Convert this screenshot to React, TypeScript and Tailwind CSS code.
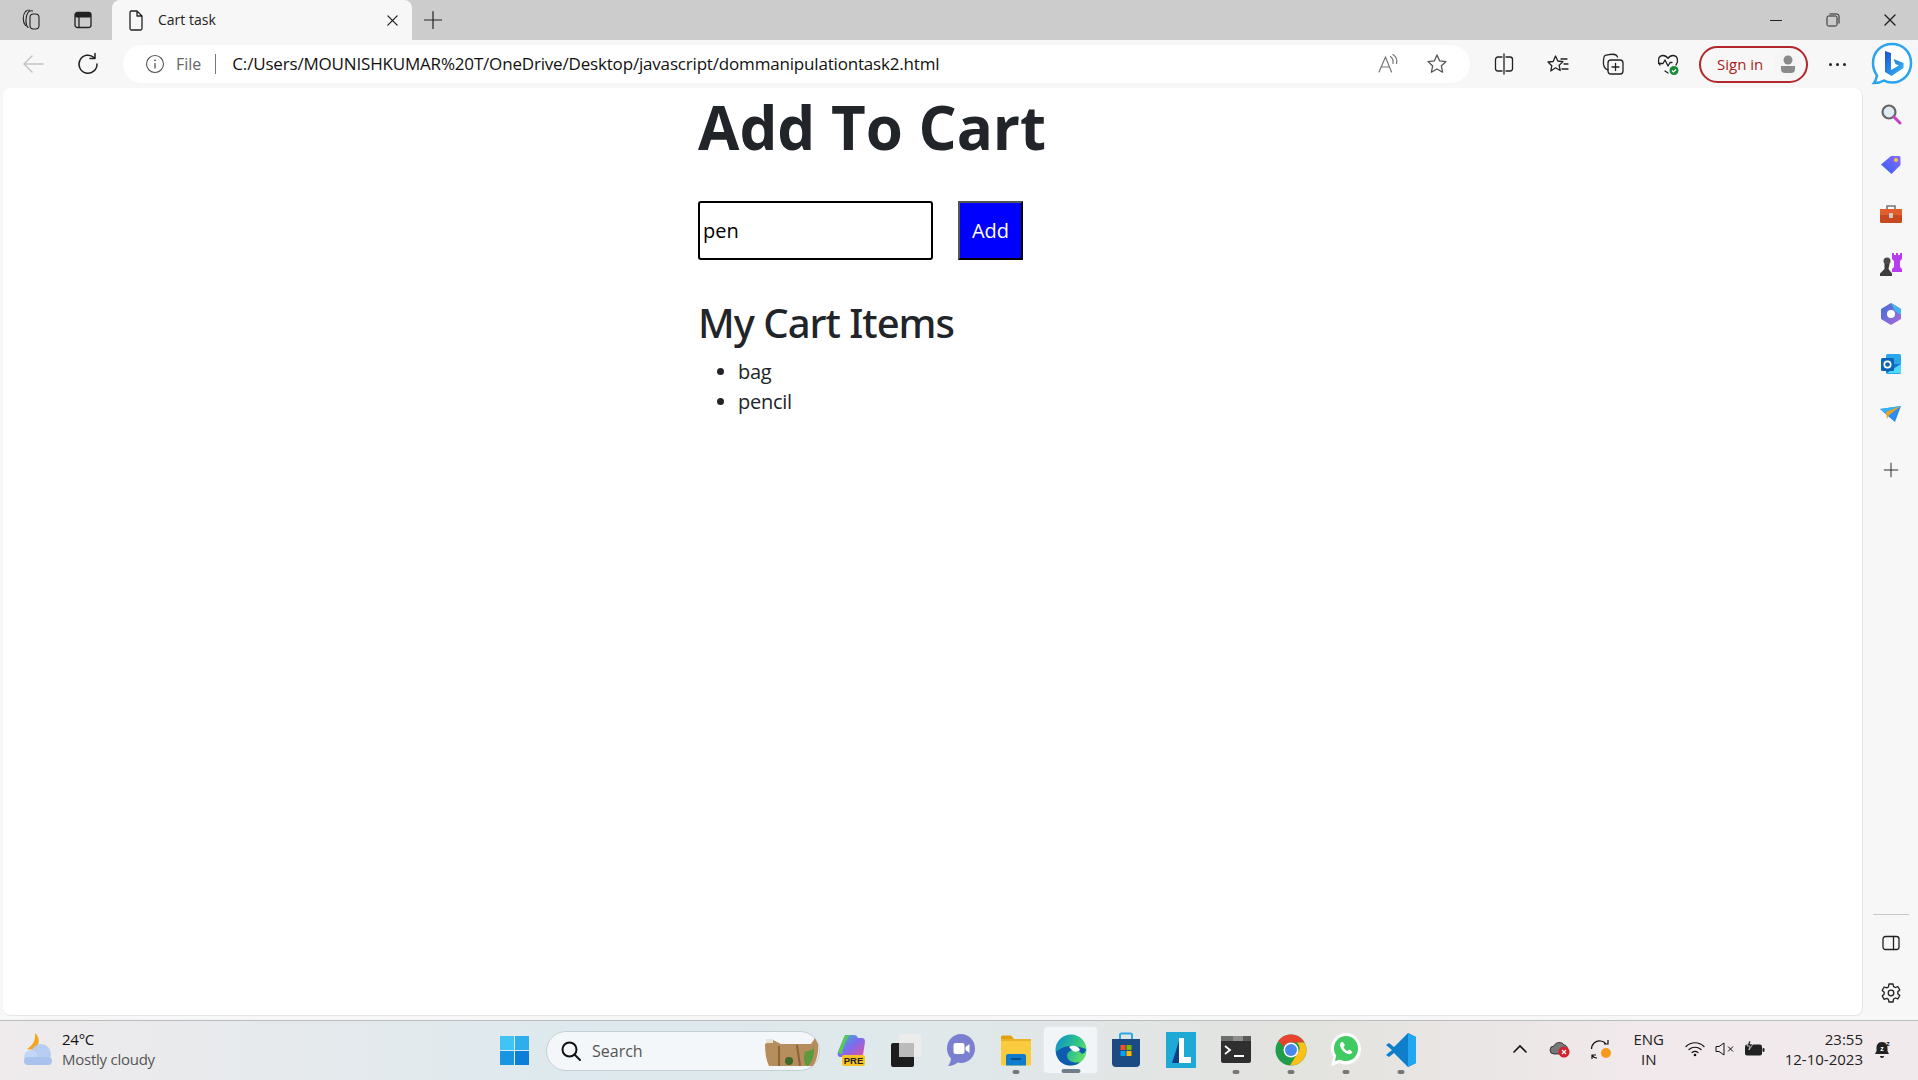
const S = ({ w = 20, h = 20, vb = "0 0 20 20", children, c = "" }: { w?: number; h?: number; vb?: string; children: React.ReactNode; c?: string }) => (
  <svg width={w} height={h} viewBox={vb} fill="none" className={`block shrink-0 ${c}`}>{children}</svg>
);
const st = { stroke: "#222", strokeWidth: 1.3, strokeLinecap: "round" as const, strokeLinejoin: "round" as const };

const Collections = () => <S w={22} h={24} vb="0 0 22 24"><rect x="10" y="6" width="9" height="15" rx="3.500" {...st} strokeWidth={1.1} /><path d="M8 19.500C5.500 17 5 9 8 4.500c1-1.500 3-2 4.500-1.500" {...st} strokeWidth={1.1} /><path d="M5.500 17.500C2.500 14 2.500 7 5.500 3.500c1-1 2.500-1.500 4-1.500" {...st} strokeWidth={1.1} /></S>;
const TabActions = () => <S w={20} h={20}><rect x="2" y="2.500" width="16" height="15" rx="2.500" {...st} /><rect x="2" y="2.500" width="16" height="5" rx="1.500" fill="#222" /><path d="M6 7v10" {...st} /></S>;
const FileIcon = () => <S w={18} h={22} vb="0 0 18 22"><path d="M3 3.500A1.500 1.500 0 0 1 4.500 2H10l5 5v12.500a1.500 1.500 0 0 1-1.500 1.500h-9A1.500 1.500 0 0 1 3 19.500z M10 2v5h5" {...st} /></S>;
const X = ({ s = 14 }: { s?: number }) => <S w={s} h={s} vb="0 0 14 14"><path d="M2 2l10 10M12 2L2 12" {...st} strokeWidth={1.4} /></S>;
const Plus = ({ s = 20 }: { s?: number }) => <S w={s} h={s}><path d="M10 1.500v17M1.500 10h17" {...st} strokeWidth={1.2} /></S>;
const Back = () => <S w={24} h={24} vb="0 0 24 24"><path d="M22 12H3M11 4l-8 8 8 8" stroke="#c4c4c4" strokeWidth="1.500" strokeLinecap="round" strokeLinejoin="round" /></S>;
const Refresh = () => <S w={24} h={24} vb="0 0 24 24"><path d="M18 5.500A9 9 0 1 0 21 12M19 1.500V6.500h-5" {...st} strokeWidth={1.5} /></S>;
const Info = () => <S w={20} h={20}><circle cx="10" cy="10" r="8.500" stroke="#555" strokeWidth="1.100" /><path d="M10 9v5.500" stroke="#555" strokeWidth="1.300" /><circle cx="10" cy="6.300" r="0.900" fill="#555" /></S>;
const ReadAloud = () => <S w={22} h={22} vb="0 0 22 22"><path d="M2 19L8.500 4l6 15M4.500 14h8M13.500 3.500c2 1.500 3 4 2.500 7M16 1.500c3 2 4.300 5.500 3.500 9" stroke="#777" strokeWidth="1.200" strokeLinecap="round" /></S>;
const Star = () => <S w={24} h={24} vb="0 0 24 24"><path d="M12 3l2.700 5.900 6.300.7-4.700 4.300 1.300 6.300-5.600-3.200-5.600 3.200 1.300-6.300L3 9.600l6.300-.7z" stroke="#555" strokeWidth="1.300" strokeLinejoin="round" /></S>;
const Split = () => <S w={22} h={22} vb="0 0 22 22"><path d="M11 1v20M9 4H5a2.500 2.500 0 0 0-2.500 2.500v9A2.500 2.500 0 0 0 5 18h4M13 4h4a2.500 2.500 0 0 1 2.500 2.500v9A2.500 2.500 0 0 1 17 18h-4" {...st} /></S>;
const Favs = () => <S w={24} h={24} vb="0 0 24 24"><path d="M9.500 4l2.300 5 5.200.6-3.800 3.700 1 5.200-4.700-2.700L4.800 19l1-5.200L2 10l5.200-.5z" {...st} /><path d="M15 7h6M18 12h4M16 17h6" {...st} /></S>;
const CollAdd = () => <S w={24} h={24} vb="0 0 24 24"><path d="M7 18C3 17 2 13 2.500 8s1.500-5 6-5.500 7-.5 8 2.500" {...st} /><rect x="7" y="8" width="15" height="14" rx="3" {...st} /><path d="M14.500 11.500v7M11 15h7" {...st} /></S>;
const Heart = () => <S w={24} h={24} vb="0 0 24 24"><path d="M4 13C1 9 2.500 3.500 7 3.500c2.500 0 4 1.500 5 3 1-1.500 2.500-3 5-3 4.500 0 6 5.500 3 9.500M9 19l3 2" {...st} /><path d="M2.500 11.500h4.500l2-3.500 3 6 2-3.500h2" {...st} /><circle cx="18" cy="18.500" r="4.500" fill="#1c8a3a" /><path d="M16 18.500l1.500 1.500 2.500-2.500" stroke="#fff" strokeWidth="1.200" /></S>;
const Bing = () => (
  <S w={42} h={44} vb="0 0 42 44">
    <defs>
      <linearGradient id="bg" x1="0" y1="0" x2="1" y2="1"><stop offset="0" stopColor="#1b4fd6" /><stop offset="1" stopColor="#35c1f1" /></linearGradient>
    </defs>
    <path d="M21 2C10 2 2 10 2 21c0 5 1.500 9 4 12.500-.5 3-1.500 5.500-3 7.500 4 0 7.500-1 10-2.500C15.500 40 18 40.500 21 40.500c11 0 19-8.500 19-19.500S32 2 21 2z" fill="#fff" stroke="#2aa4ee" strokeWidth="2.500" />
    <path d="M14 9l6 2v17l8-4.500-3.500-1.500-2-5 10 4v5l-12 8-6.500-4z" fill="url(#bg)" />
  </S>
);
const Panel = () => <S w={18} h={16} vb="0 0 18 16"><rect x="1" y="1.500" width="16" height="13" rx="2.500" {...st} /><path d="M11.500 1.500v13" {...st} /></S>;
const Gear = () => <S w={22} h={22} vb="0 0 22 22"><path d="M9 2h4l.6 2.600 1.700.9 2.500-.9 2 3.400-2 1.800v1.900l2 1.800-2 3.400-2.500-.9-1.700 1L13 20H9l-.6-2.600-1.700-1-2.500.9-2-3.400 2-1.800v-1.900l-2-1.800 2-3.400 2.500.9 1.700-.9z" {...st} /><circle cx="11" cy="11" r="2.800" {...st} /></S>;

const SideSearch = () => <S w={22} h={22} vb="0 0 22 22"><circle cx="9" cy="9" r="6.500" fill="#dfeaf2" stroke="#666" strokeWidth="2.200" /><path d="M14 14l6 6" stroke="#c83fd0" strokeWidth="3" strokeLinecap="round" /></S>;
const SideTag = () => <S w={22} h={22} vb="0 0 22 22"><defs><linearGradient id="tg" x1="0" y1="1" x2="1" y2="0"><stop offset="0" stopColor="#2e5df5" /><stop offset="1" stopColor="#8a6cf8" /></linearGradient></defs><path d="M11 3h8a1.500 1.500 0 0 1 1.500 1.500V12l-9 9L1 11.500z" fill="url(#tg)" /><circle cx="16" cy="7" r="2" fill="#f6c93a" /></S>;
const SideBox = () => <S w={24} h={22} vb="0 0 24 22"><path d="M8 6V3h8v3" stroke="#777" strokeWidth="1.600" /><rect x="1" y="6" width="22" height="14" rx="1.500" fill="#c8491f" /><rect x="1" y="6" width="22" height="6" fill="#e25f2d" /><rect x="10" y="10" width="4" height="5" rx="1" fill="#ccc" /></S>;
const SideChess = () => <S w={24} h={26} vb="0 0 24 26"><path d="M13 2h2v2h2V2h2v2h2V2h2v6l-2 2v6l2 2v3H13v-3l2-2v-6l-2-2z" fill="#b83df0" /><circle cx="8" cy="10" r="3.500" fill="#4a4a4a" /><path d="M5.500 13h5l-1 5 3.500 4.500V25H1v-2.500L5.500 18z" fill="#3d3d3d" /></S>;
const SideM365 = () => <S w={22} h={24} vb="0 0 22 24"><defs><linearGradient id="m1" x1="0" y1="0" x2="1" y2="1"><stop offset="0" stopColor="#3a6fd8" /><stop offset="1" stopColor="#b06ad8" /></linearGradient></defs><path d="M11 1l10 6v10l-10 6L1 17V7z" fill="url(#m1)" /><path d="M11 1l10 6v6l-6-4z" fill="#42b6e8" /><circle cx="11" cy="12" r="4" fill="#fff" /></S>;
const SideOutlook = () => <S w={22} h={22} vb="0 0 22 22"><rect x="6" y="1" width="15" height="20" rx="1.500" fill="#28a8ea" /><path d="M6 11l15 0v9H6z" fill="#0f78d4" /><path d="M7 20l14-9v9z" fill="#50d9ff" /><rect x="1" y="5" width="13" height="13" rx="1.500" fill="#0a64b8" /><circle cx="7.500" cy="11.500" r="3.200" stroke="#fff" strokeWidth="1.700" /></S>;
const SidePlane = () => <S w={22} h={18} vb="0 0 22 18"><path d="M0 4l21-3-6 16-6-5z" fill="#2c8df0" /><path d="M0 4l21-3L7 9z" fill="#36b2f5" /><path d="M21 1L6 7l1 7 2-4z" fill="#f0a21a" /></S>;

const Win = () => (
  <div className="grid grid-cols-2 grid-rows-2 gap-[1px] w-[29px] h-[29px]">
    <div className="bg-[#40c4f6]" /><div className="bg-[#2eaeec]" /><div className="bg-[#1a95e2]" /><div className="bg-[#0a7fd8]" />
  </div>
);
const Weather = () => <S w={32} h={34} vb="0 0 32 34"><path d="M13 1c4 3 5 9 2 14-2 3-6 3-10 2 5-3 9-8 8-16z" fill="#f4a623" /><circle cx="19" cy="22" r="10" fill="#b7cdf2" /><circle cx="9" cy="25" r="7" fill="#c4d6f5" /><rect x="2" y="25" width="28" height="8" rx="4" fill="#aac3ee" /></S>;
const SearchGlass = () => <S w={22} h={22} vb="0 0 22 22"><circle cx="9.500" cy="9.500" r="7" stroke="#111" strokeWidth="2" /><path d="M14.500 14.500L20 20" stroke="#111" strokeWidth="2" strokeLinecap="round" /></S>;
const Wall = () => <S w={56} h={30} vb="0 0 56 30"><path d="M2 8l8-4 8 4h30l4-6 3 6c1 8-1 16-5 22H6C3 24 2 16 2 8z" fill="#b68d5c" /><path d="M16 10v20M34 9l3 21" stroke="#8a6438" strokeWidth="2" /><path d="M42 16c5-3 9 0 9-7 0 10 0 15-6 21-4 0-5-8-3-14z" fill="#5d9a3e" /><circle cx="26" cy="25" r="4" fill="#3d6a2a" /><path d="M3 3h7v4H3z" fill="#e8e2d8" /></S>;
const Copilot = () => <S w={30} h={32} vb="0 0 30 32"><defs><linearGradient id="cp" x1="0" y1="0" x2="1" y2="1"><stop offset="0" stopColor="#2fc0c8" /><stop offset=".5" stopColor="#7c6cf0" /><stop offset="1" stopColor="#e84fa0" /></linearGradient></defs><path d="M9 1h9c2 0 3 1 4 3h4c2 0 3 1.500 3 4l-2 13c-.5 2-2 2-3 2H5c-3 0-4-2-3-5z" fill="url(#cp)" /><path d="M2 18L8 3c1-2 4-2 6-2-4 4-7 12-8 20z" fill="#5cc85a" /><rect x="6" y="21" width="23" height="11" rx="2" fill="#f7c325" /><text x="17.500" y="30" textAnchor="middle" fontSize="9.500" fontWeight="800" fill="#222" fontFamily="Liberation Sans, sans-serif">PRE</text></S>;
const TaskView = () => <S w={32} h={34} vb="0 0 32 34"><rect x="1" y="10" width="23" height="24" rx="2" fill="#1d1d1d" /><rect x="9" y="1" width="22" height="23" rx="2" fill="#ececec" /><rect x="9" y="10" width="15" height="14" fill="#bbb" /></S>;
const Teams = () => <S w={30} h={34} vb="0 0 30 34"><path d="M15 1C7 1 1 7.500 1 15.500c0 4 1.500 7.500 4 10-.3 2.500-1 5-3 7.500 4 0 7-1.500 9.500-3.500 1 .3 2.300.5 3.500.5 8 0 14-6.500 14-14.500S23 1 15 1z" fill="#7b7fd0" /><rect x="7.500" y="10" width="11" height="11" rx="2" fill="#fff" /><path d="M19.500 14l4-3v9l-4-3z" fill="#fff" /></S>;
const Explorer = () => <S w={32} h={32} vb="0 0 32 32"><path d="M1 3a1.500 1.500 0 0 1 1.500-1.500H11L14 5H1z" fill="#e2a20d" /><path d="M1 5h30v25a1.500 1.500 0 0 1-1.500 1.500h-27A1.500 1.500 0 0 1 1 30z" fill="#fbcb3f" /><path d="M1 5h30v2H1z" fill="#e9b22a" /><path d="M6 22a2 2 0 0 1 2-2h16a2 2 0 0 1 2 2v9.500H6z" fill="#0f7bcf" /><rect x="11" y="24" width="10" height="2" fill="#0b4f8a" /></S>;
const Edge = () => <S w={32} h={32} vb="0 0 32 32"><defs><linearGradient id="e1" x1="0" y1="0" x2="1" y2="0.500"><stop offset="0" stopColor="#0c8ad6" /><stop offset=".6" stopColor="#2ac08d" /><stop offset="1" stopColor="#5fdc6c" /></linearGradient></defs><circle cx="16" cy="16" r="15.500" fill="url(#e1)" /><path d="M1 17C1 26 8 31.500 15 31.500c4 0 8-1 10-3.500-6 2-13-1-13-6.500 0-3 3-5.500 6-5.500 4 0 7 1.500 9 4 3-1 4-3 4-5-5-2-16-5-24-1-4 2-6 4-6 3.500z" fill="#0f5bb0" /><path d="M14 13c3-2 9-2 11 3-2 2-5 2-7 1-2-2-3-3-4-4z" fill="#fff" /></S>;
const Store = () => <S w={30} h={36} vb="0 0 30 36"><path d="M9 7V3a1.500 1.500 0 0 1 1.500-1.500h9A1.500 1.500 0 0 1 21 3v4" stroke="#2aa8e8" strokeWidth="2" /><path d="M1 7h28v24a4 4 0 0 1-4 4H5a4 4 0 0 1-4-4z" fill="#1c4a82" /><rect x="9.500" y="13" width="5" height="5" fill="#f25022" /><rect x="15.500" y="13" width="5" height="5" fill="#7fba00" /><rect x="9.500" y="19" width="5" height="5" fill="#00a4ef" /><rect x="15.500" y="19" width="5" height="5" fill="#ffb900" /></S>;
const LApp = () => <div className="w-[30px] h-[36px] bg-[#1fa9d6] flex items-center justify-center"><S w={22} h={28} vb="0 0 22 28"><path d="M9 2h5v19h7v6H9z" fill="#fff" /><path d="M2 27L9 5v22z" fill="#113f86" /></S></div>;
const Terminal = () => <S w={30} h={27} vb="0 0 30 27"><rect width="30" height="27" rx="2" fill="#2f2f2f" /><rect width="12" height="5" fill="#6e6e6e" /><rect x="12" width="10" height="5" fill="#8e8e8e" /><rect x="22" width="8" height="5" fill="#5a5a5a" /><path d="M4 10l5 4-5 4" stroke="#fff" strokeWidth="1.800" /><rect x="13" y="19" width="10" height="2" fill="#fff" /></S>;
const Chrome = () => <S w={32} h={34} vb="0 0 32 32"><circle cx="16" cy="16" r="15.500" fill="#1f9d4d" /><path d="M16 .5A15.500 15.500 0 0 1 29.500 8.500H16a7.500 7.500 0 0 0-7 4.500L3.500 6.800A15.500 15.500 0 0 1 16 .5z" fill="#e8432e" /><path d="M29.500 8.500A15.500 15.500 0 0 1 15 31.500l7-11.500a7.500 7.500 0 0 0 0-11.500z" fill="#fbc117" /><circle cx="16" cy="16" r="7.500" fill="#fff" /><circle cx="16" cy="16" r="6" fill="#4a88ec" /></S>;
const WhatsApp = () => <S w={32} h={36} vb="0 0 32 36"><path d="M16 1C7.500 1 1 8 1 16.500c0 3 .8 5.800 2.300 8L1 34l8.500-3c2 1 4.200 1.500 6.500 1.500 8.500 0 15-7 15-15.500S24.500 1 16 1z" fill="#fff" /><path d="M16 4C9 4 4 9.500 4 16.500c0 2.700.8 5 2.200 7L5 29l5-1.600c1.800 1 3.800 1.600 6 1.600 7 0 12-5.500 12-12.500S23 4 16 4z" fill="#3fcb62" /><path d="M11.500 10c-1.500 1-2 3-1 5 1.500 3.500 4 6 7.500 7 2 .5 4-.5 4.500-2l-3-2.500-2 1.500c-1.500-.5-3.500-2.500-4-4l1.500-1.800-2-3.200z" fill="#fff" /></S>;
const VSCode = () => <S w={32} h={36} vb="0 0 32 36"><path d="M23 1l8 4v26l-8 4L9 21l-5 4-3-2 6-5-6-5 3-2 5 4z" fill="#0f7fcc" /><path d="M23 1l8 4v26l-8 4z" fill="#22a6f0" /></S>;

const Chevron = () => <S w={16} h={10} vb="0 0 16 10"><path d="M2 8l6-6 6 6" stroke="#111" strokeWidth="1.600" strokeLinecap="round" /></S>;
const CloudErr = () => <S w={22} h={18} vb="0 0 22 18"><path d="M5 14a4 4 0 0 1 0-8c1-4 8-5 10-1 2 0 4 2 3 5l-4 4z" fill="#777" stroke="#222" strokeWidth=".8" /><circle cx="15" cy="12" r="5.500" fill="#d6202b" /><path d="M13 10l4 4M17 10l-4 4" stroke="#fff" strokeWidth="1.200" /></S>;
const Sync = () => <S w={22} h={22} vb="0 0 22 22"><path d="M1.500 11C1.500 6 6 2 11 3c2 .3 4 1.500 5 3M18 2v4h-4" stroke="#111" strokeWidth="1.200" /><path d="M7 20c-2 0-4-1-5-3M2 21v-4h4" stroke="#111" strokeWidth="1.200" /><circle cx="16" cy="15" r="5" fill="#f79a1c" /></S>;
const Wifi = () => <S w={20} h={16} vb="0 0 20 16"><path d="M1 5.500c5-5 13-5 18 0M4 8.500c3.500-3 8.500-3 12 0M7 11.500c2-1.500 4-1.500 6 0" stroke="#111" strokeWidth="1.200" strokeLinecap="round" /><circle cx="10" cy="14" r="1.300" fill="#111" /></S>;
const Mute = () => <S w={20} h={16} vb="0 0 20 16"><path d="M1 5.500h3L9 2v12l-5-3.500H1z" stroke="#111" strokeWidth="1" strokeLinejoin="round" /><path d="M13 5.500l5 5M18 5.500l-5 5" stroke="#111" strokeWidth="1" /></S>;
const Batt = () => <S w={21} h={16} vb="0 0 21 16"><rect x="1" y="3.500" width="17" height="11" rx="2" fill="#222" /><rect x="18.500" y="7" width="2" height="4" rx="1" fill="#222" /><path d="M5 0l-2 5h3l-1 4 4-6H6l1-3z" fill="#222" stroke="#eee" strokeWidth=".7" /></S>;
const Bell = () => <S w={18} h={20} vb="0 0 18 20"><path d="M8 3C4 3 2.500 6 2.500 9v3L1 15h14l-1.500-3V9C13.500 6 12 3 8 3z" fill="#222" /><path d="M6 17h4a2 2 0 0 1-4 0z" fill="#222" /><text x="8" y="12" fontSize="7" textAnchor="middle" fill="#fff" fontWeight="700" fontFamily="Liberation Sans, sans-serif">z</text><text x="14" y="6.500" fontSize="7" textAnchor="middle" fill="#222" fontWeight="700" fontFamily="Liberation Sans, sans-serif">z</text></S>;

const apps: { icon: React.ReactNode; dot?: boolean; active?: boolean }[] = [
  { icon: <Copilot /> },
  { icon: <TaskView /> },
  { icon: <Teams /> },
  { icon: <Explorer />, dot: true },
  { icon: <Edge />, active: true },
  { icon: <Store /> },
  { icon: <LApp /> },
  { icon: <Terminal />, dot: true },
  { icon: <Chrome />, dot: true },
  { icon: <WhatsApp />, dot: true },
  { icon: <VSCode />, dot: true },
];
const side = [<SideSearch />, <SideTag />, <SideBox />, <SideChess />, <SideM365 />, <SideOutlook />, <SidePlane />];

export default function App() {
  return (
    <div className="w-[1918px] h-[1080px] flex flex-col overflow-hidden bg-[#f7f7f7] text-[#212529] font-['Open_Sans','Noto_Sans',sans-serif]">
      {/* title bar */}
      <div className="h-10 bg-[#cccccc] flex items-end shrink-0">
        <div className="w-[112px] h-10 flex items-center pl-[20px] gap-[31px]"><Collections /><TabActions /></div>
        <div className="w-[300px] h-10 bg-[#f7f7f7] rounded-t-lg flex items-center pl-[15px] pr-[13px]">
          <FileIcon />
          <span className="ml-[13px] -mt-[1px] text-[14px] flex-1 text-[#222]">Cart task</span>
          <X s={13} />
        </div>
        <div className="h-10 flex items-center pl-[11px] flex-1"><Plus /></div>
        <div className="h-10 flex items-center">
          <div className="w-[57px] flex justify-center"><div className="w-3 h-px bg-[#222]" /></div>
          <div className="w-[57px] flex justify-center"><S w={14} h={14} vb="0 0 14 14"><rect x="1" y="3" width="10" height="10" rx="1.500" stroke="#222" /><path d="M3.500 1H11a2 2 0 0 1 2 2v7.500" stroke="#222" /></S></div>
          <div className="w-[57px] flex justify-center"><X /></div>
        </div>
      </div>
      {/* toolbar */}
      <div className="h-12 flex items-center shrink-0">
        <div className="w-[123px] flex items-center pl-[21px] gap-[31px]"><Back /><Refresh /></div>
        <div className="w-[1347px] h-[38px] rounded-full bg-white flex items-center pl-[22px] pr-[21px]">
          <Info />
          <span className="ml-[11px] text-[16px] text-[#666]">File</span>
          <div className="ml-[14px] w-px h-[20px] bg-[#777]" />
          <span className="ml-[16px] text-[17px] flex-1 text-[#111] tracking-[-0.18px]">C:/Users/MOUNISHKUMAR%20T/OneDrive/Desktop/javascript/dommanipulationtask2.html</span>
          <div className="flex items-center gap-[26px]"><ReadAloud /><Star /></div>
        </div>
        <div className="flex items-center pl-[23px] gap-[31px]"><Split /><Favs /><CollAdd /><Heart /></div>
        <div className="ml-[19px] w-[109px] h-[37px] rounded-full border-2 border-[#b3262b] flex items-center pl-[16px] pr-[4px] justify-between">
          <span className="text-[15px] text-[#a81c21]">Sign in</span>
          <div className="w-[28px] h-[28px] rounded-full bg-[#f5f5f5] flex items-center justify-center">
            <S w={16} h={20} vb="0 0 16 20"><circle cx="8" cy="6" r="4.500" fill="#8a8a8a" /><path d="M1 12h14v3a4 4 0 0 1-4 4H5a4 4 0 0 1-4-4z" fill="#8a8a8a" /></S>
          </div>
        </div>
        <div className="ml-[21px] flex gap-[4px]"><i className="w-[3px] h-[3px] rounded-full bg-[#222]" /><i className="w-[3px] h-[3px] rounded-full bg-[#222]" /><i className="w-[3px] h-[3px] rounded-full bg-[#222]" /></div>
        <div className="ml-[25px]"><Bing /></div>
      </div>
      {/* body */}
      <div className="h-[929px] flex shrink-0 pl-[3px]">
        <div className="w-[1860px] h-[928px] bg-white rounded-lg border-r border-b border-[#e5e5e5] pl-[695px]">
          <h1 className="mt-[3px] text-[60px] leading-[72px] font-bold">Add To Cart</h1>
          <div className="mt-[38px] flex items-start gap-[25px]">
            <input readOnly value="pen" className="w-[235px] h-[59px] border-2 border-black rounded-[3px] pl-[3px] text-[20px] text-black bg-white outline-none" />
            <button className="w-[65px] h-[59px] bg-[#0000ff] text-white text-[20px] border-2 border-t-[#555] border-l-[#555] border-b-black border-r-black">Add</button>
          </div>
          <h2 className="mt-[39px] text-[40px] leading-[48px] font-medium font-['Noto_Sans'] tracking-[-1px]">My Cart Items</h2>
          <ul className="mt-[10px] list-disc pl-[40px] text-[20px] leading-[30px] tracking-[-0.25px]">
            <li>bag</li>
            <li>pencil</li>
          </ul>
        </div>
        <div className="flex-1 flex flex-col items-center pt-[1px]">
          <div className="flex flex-col items-center">
            {side.map((ic, i) => <div key={i} className="h-[50px] flex items-center justify-center">{ic}</div>)}
            <div className="h-[62px] flex items-center justify-center"><Plus s={16} /></div>
          </div>
          <div className="flex-1" />
          <div className="w-[36px] h-px bg-[#c8c8c8] ml-[1px]" />
          <div className="h-[56px] flex items-center"><Panel /></div>
          <div className="h-[44px] flex items-center mb-[2px]"><Gear /></div>
        </div>
      </div>
      <div className="h-[3px] bg-[#f7f7f7] shrink-0" />
      {/* taskbar */}
      <div className="h-[60px] shrink-0 border-t border-[#b9bdbf] bg-[linear-gradient(90deg,#efebec_0%,#dde9ee_30%,#e0e8ea_50%,#e3e3df_68%,#f1e9eb_85%,#f1eaec_100%)] flex items-center relative">
        <div className="w-[500px] flex items-center pl-[22px] gap-[8px] -mt-[3px]">
          <Weather />
          <div className="text-[15px] leading-[20px]">
            <div className="text-[#111] tracking-[-0.25px]">24°C</div>
            <div className="text-[#555] tracking-[-0.25px]">Mostly cloudy</div>
          </div>
        </div>
        <Win />
        <div className="ml-[17px] w-[274px] h-[40px] rounded-full bg-[#f3f7f9] border border-[#c6d0d4] flex items-center pl-[13px] pr-0 justify-between">
          <div className="flex items-center gap-[10px]"><SearchGlass /><span className="text-[16px] text-[#555]">Search</span></div>
          <Wall />
        </div>
        <div className="ml-[3px] mb-[2px] flex items-center">
          {apps.map((a, i) => (
            <div key={i} className={`w-[55px] h-[48px] flex items-center justify-center relative rounded ${a.active ? "bg-[#f1f5f7] border border-[#e4e8ea]" : ""}`}>
              {a.icon}
              {a.dot && <div className="absolute bottom-0 left-1/2 -translate-x-1/2 w-[7px] h-[4px] rounded-full bg-[#777]" />}
              {a.active && <div className="absolute bottom-0 left-1/2 -translate-x-1/2 w-[19px] h-[4px] rounded-full bg-[#6e7f89]" />}
            </div>
          ))}
        </div>
        <div className="flex-1" />
        <div className="flex items-center pr-[26px] -mt-[3px]">
          <Chevron />
          <div className="ml-[21px]"><CloudErr /></div>
          <div className="ml-[19px]"><Sync /></div>
          <div className="ml-[11px] w-[52px] text-center text-[15px] leading-[20px] text-[#222]">ENG<br />IN</div>
          <div className="ml-[10px]"><Wifi /></div>
          <div className="ml-[10px]"><Mute /></div>
          <div className="ml-[9px]"><Batt /></div>
          <div className="ml-[20px] text-right text-[15px] leading-[20px] text-[#222]">23:55<br />12-10-2023</div>
          <div className="ml-[11px]"><Bell /></div>
        </div>
      </div>
    </div>
  );
}
